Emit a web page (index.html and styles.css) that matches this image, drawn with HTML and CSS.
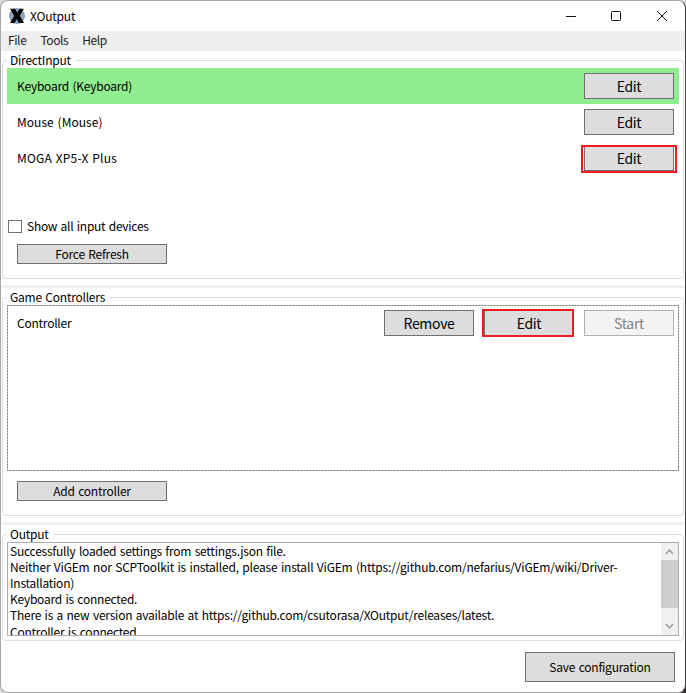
FILE: index.html
```
<!DOCTYPE html>
<html lang="en">
<head>
<meta charset="utf-8">
<title>XOutput</title>
<link rel="stylesheet" href="styles.css">
</head>
<body>
<div class="window">
  <header class="titlebar">
    <svg class="logo" width="16" height="16" viewBox="0 0 16 16"><circle cx="8" cy="8" r="8" fill="#8fa3ba"/><path d="M1 .8h5L8.200 4.600 10.600.8h4.200L10.800 7.800l4.200 7.200h-5L7.700 11.300 5.400 15H.9L5.200 8z" fill="#050505"/></svg>
    <span class="title">XOutput</span>
    <svg class="controls" width="104" height="12" viewBox="0 0 104 12" fill="none" stroke="#111"><path d="M0 6.500h10"/><rect x="45.500" y="1.500" width="9" height="9" rx="1"/><path d="M91 1l10 10M101 1L91 11"/></svg>
  </header>
  <nav class="menu"><span>File</span><span>Tools</span><span>Help</span></nav>

  <section class="group inputs">
    <h2><span>DirectInput</span></h2>
    <div class="row active"><span>Keyboard (Keyboard)</span><button>Edit</button></div>
    <div class="row"><span class="t-mouse">Mouse (Mouse)</span><button>Edit</button></div>
    <div class="row"><span class="t-moga">MOGA XP5-X Plus</span><button class="mark-input">Edit</button></div>
    <label class="check"><i></i><span>Show all input devices</span></label>
    <button class="small">Force Refresh</button>
  </section>
  <div class="splitter"></div>
  <section class="group controllers">
    <h2><span>Game Controllers</span></h2>
    <div class="list">
      <svg class="outline" width="672" height="166"><rect x=".5" y=".5" width="671" height="165"/></svg>
      <div class="row"><span>Controller</span><button>Remove</button><button class="mark-ctrl">Edit</button><button class="disabled">Start</button></div>
    </div>
    <button class="small">Add controller</button>
  </section>
  <div class="splitter"></div>
  <section class="group output">
    <h2><span>Output</span></h2>
    <div class="textbox">
      <div class="log">
        <p>Successfully loaded settings from settings.json file.</p>
        <p class="vigem">Neither ViGEm nor SCPToolkit is installed, please install ViGEm (https://github.com/nefarius/ViGEm/wiki/Driver-</p>
        <p>Installation)</p>
        <p>Keyboard is connected.</p>
        <p>There is a new version available at https://github.com/csutorasa/XOutput/releases/latest.</p>
        <p class="last">Controller is connected.</p>
      </div>
      <div class="scrollbar">
        <svg width="17" height="17" viewBox="0 0 17 17"><path d="M5 11l3.500-4 3.500 4"/></svg>
        <div class="thumb"></div>
        <svg width="17" height="17" viewBox="0 0 17 17"><path d="M5 6l3.500 4L12 6"/></svg>
      </div>
    </div>
  </section>
  <footer><button class="save">Save configuration</button></footer>
</div>
</body>
</html>
```
FILE: styles.css
```
* { box-sizing: border-box; }
body {
  margin: 0;
  height: 693px;
  overflow: hidden;
  background: linear-gradient(#dcdcdc 0 50px, #302b2d 50px) right / 50% 100% no-repeat, #dcdcdc;
  font: 12px/16px "Noto Sans CJK KR", "Noto Sans", sans-serif;
  letter-spacing: -0.23px;
  word-spacing: 1px;
  color: #000;
}
.window {
  width: 686px;
  height: 693px;
  background: #fff;
  border: 1px solid #a8a8a8;
  border-right-color: #414141;
  border-radius: 8px;
  display: flex;
  flex-direction: column;
  overflow: hidden;
  white-space: nowrap;
}
.titlebar { height: 30px; flex: none; display: flex; align-items: center; padding: 0 15px 0 8px; }
.title { margin-left: 5px; letter-spacing: -0.2px; }
.controls { margin-left: auto; }
.menu { height: 20px; flex: none; background: #efefef; display: flex; gap: 14px; padding: 1px 7px; color: #222; letter-spacing: -0.4px; }
.group { flex: none; width: 682px; margin-left: 1px; border: 1px solid #d5dfe5; border-radius: 4px; display: flex; flex-direction: column; padding: 0 4px; }
.inputs { margin-top: 9px; height: 219px; }
.controllers { margin-top: 9px; height: 219px; }
.output { margin-top: 9px; height: 107px; }
h2 { margin: -9px 0 0 0; height: 16px; font: inherit; flex: none; display: flex; letter-spacing: -0.23px; }
h2 span { background: #fff; padding: 0 4px 0 3px; }
.row { height: 36px; flex: none; display: flex; align-items: center; gap: 10px; padding: 0 5px 0 10px; }
.row > span { margin-right: auto; }
.t-mouse { letter-spacing: 0.05px; }
.t-moga { letter-spacing: 0.18px; }
.active { background: #90ee90; }
button {
  width: 90px;
  height: 26px;
  padding: 0;
  background: #ddd;
  border: 1px solid #707070;
  color: #000;
  font: 14px/20px "Noto Sans CJK KR", "Noto Sans", sans-serif;
  letter-spacing: -0.3px;
  word-spacing: 1px;
  display: flex;
  align-items: center;
  justify-content: center;
  white-space: nowrap;
}
.mark-input, .mark-ctrl { position: relative; }
.mark-input::after, .mark-ctrl::after { content: ""; position: absolute; border: 2px solid #ed1c24; }
.mark-input::after { inset: -1px -4px -3px; }
.mark-ctrl::after { inset: -2px -1px -2px -3px; }
.disabled { background: #f4f4f4; border-color: #adb2b5; color: #838383; }
.check { display: flex; align-items: center; height: 16px; margin: 42px 0 10px 1px; flex: none; letter-spacing: -0.27px; }
.check i { width: 14px; height: 13px; border: 1px solid #707070; margin-right: 5px; }
.small { width: 150px; height: 20px; font-size: 12px; line-height: 16px; letter-spacing: -0.23px; margin-left: 10px; flex: none; }
.splitter { flex: none; height: 3px; background: #f0f0f0; margin-top: 6px; }
.list { height: 166px; flex: none; position: relative; margin-bottom: 10px; }
.outline { position: absolute; inset: 0; fill: none; stroke: #707070; stroke-dasharray: 2 1; }
.list .row { position: relative; }
.textbox { height: 94px; flex: none; border: 1px solid #abadb3; display: flex; overflow: hidden; }
.log { flex: 1; overflow: hidden; padding: 0 2px; }
.log p { margin: 0; width: max-content; }
.log .vigem { letter-spacing: -0.195px; }
.log .last { padding-top: 1px; }
.scrollbar { width: 17px; background: #f0f0f0; display: flex; flex-direction: column; }
.scrollbar svg { fill: none; stroke: #999; stroke-width: 1.3; flex: none; }
.thumb { height: 48px; background: #cdcdcd; margin-bottom: 10px; flex: none; }
footer { display: flex; justify-content: flex-end; padding: 11px 10px 0 0; }
.save { width: 150px; height: 30px; font-size: 12px; letter-spacing: -0.23px; }
```
